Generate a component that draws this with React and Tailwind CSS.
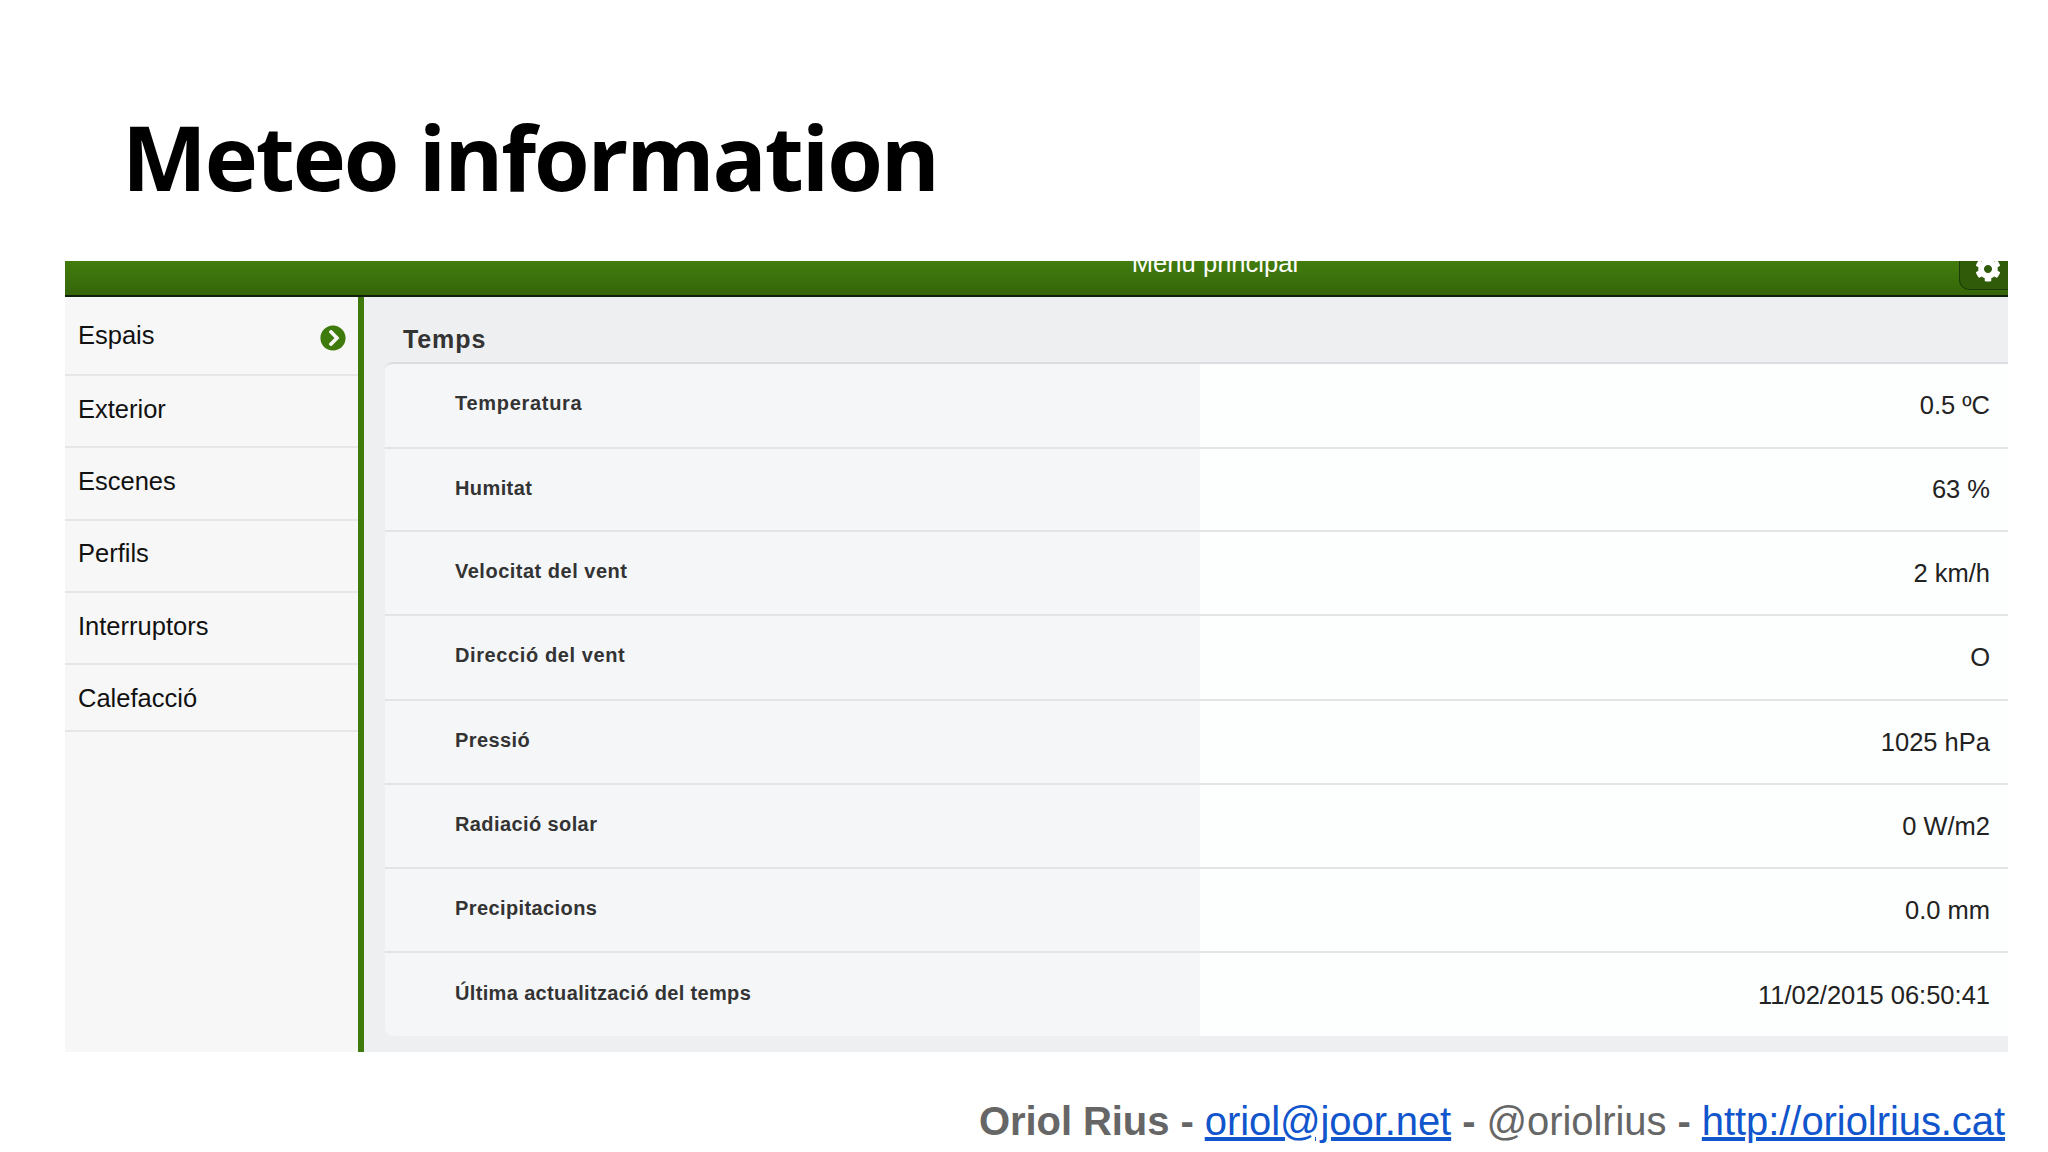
import React from 'react';
import { FaCog, FaChevronCircleRight } from 'react-icons/fa';

const menu = [
    { text: 'Espais', h: 'h-[79px]', pb: 'pb-[2px]', arrow: true },
    { text: 'Exterior', h: 'h-[72px]', pb: 'pb-[5px]' },
    { text: 'Escenes', h: 'h-[73px]', pb: 'pb-[5px]' },
    { text: 'Perfils', h: 'h-[72px]', pb: 'pb-[6px]' },
    { text: 'Interruptors', h: 'h-[72px]', pb: 'pb-[5px]' },
    { text: 'Calefacció', h: 'h-[67px]', pb: 'pb-0' },
];

const rows = [
    { label: 'Temperatura', value: '0.5 ºC', h: 'h-[85px]', pb: 'pb-[6px]', track: 'tracking-[0.7px]' },
    { label: 'Humitat', value: '63 %', h: 'h-[83px]', pb: 'pb-[4px]', track: 'tracking-[0.4px]' },
    { label: 'Velocitat del vent', value: '2 km/h', h: 'h-[84px]', pb: 'pb-[4px]', track: 'tracking-[0.5px]' },
    { label: 'Direcció del vent', value: 'O', h: 'h-[85px]', pb: 'pb-[5px]', track: 'tracking-[0.6px]' },
    { label: 'Pressió', value: '1025 hPa', h: 'h-[84px]', pb: 'pb-[4px]', track: 'tracking-[0.4px]' },
    { label: 'Radiació solar', value: '0 W/m2', h: 'h-[84px]', pb: 'pb-[4px]', track: 'tracking-[0.4px]' },
    { label: 'Precipitacions', value: '0.0 mm', h: 'h-[84px]', pb: 'pb-[4px]', track: 'tracking-[0.4px]' },
    { label: 'Última actualització del temps', value: '11/02/2015 06:50:41', h: 'h-[85px]', pb: 'pb-[6px]', track: 'tracking-[0.35px]' },
];

const App = () => {
    return (
        <div className="w-[2048px] h-[1152px] bg-white overflow-hidden font-['Liberation_Sans',sans-serif]">
            <h1 className="h-[261px] pl-[122px] pt-[96px] text-[90px] leading-[120px] font-bold text-black tracking-[-2.1px] font-['Open_Sans',sans-serif]">
                Meteo information
            </h1>

            <div className="ml-[65px] w-[1943px]">
                <div className="relative h-[36px] overflow-hidden flex justify-center bg-gradient-to-b from-[#427d0e] to-[#356509] border-b-2 border-[#10200a]">
                    <span className="ml-[357px] -mt-[13px] text-[25.6px] leading-[30px] text-white">Menu principal</span>
                    <div className="absolute right-0 -top-[10px] w-[49px] h-[39px] flex items-center justify-center bg-[#305c0a] border border-r-0 border-[#1c3a08] rounded-bl-[10px]">
                        <FaCog className="text-white text-[26px] ml-[8px] mt-[-4px]" />
                    </div>
                </div>

                <div className="flex h-[755px]">
                    <div className="w-[293px] bg-[#f7f7f8]">
                        {menu.map((item) => (
                            <div key={item.text} className={`flex items-center justify-between pl-[13px] pr-[12px] border-b-2 border-[#e6e6e8] ${item.h} ${item.pb}`}>
                                <span className="text-[25.5px] leading-[30px] text-[#111]">{item.text}</span>
                                {item.arrow && <FaChevronCircleRight className="text-[#3f7a0c] text-[26px] mt-[6px]" />}
                            </div>
                        ))}
                    </div>
                    <div className="w-[6px] bg-[#3f7a0c]"></div>

                    <div className="flex-1 bg-[#eeeff1] pl-[21px] pb-[16px] flex flex-col">
                        <div className="h-[65px] pl-[18px] pt-[27px] text-[25px] leading-[30px] font-bold text-[#333] tracking-[0.9px]">Temps</div>
                        <div className="flex-1 border-t-2 border-[#dcdde0] rounded-tl-[8px] rounded-bl-[8px] overflow-hidden">
                            {rows.map((row, i) => (
                                <div key={row.label} className={`flex ${row.h} ${i < rows.length - 1 ? 'border-b-2 border-[#e3e4e6]' : ''}`}>
                                    <div className={`w-[815px] bg-[#f5f6f8] pl-[70px] flex items-center text-[20px] font-bold text-[#333] ${row.track} ${row.pb}`}>
                                        {row.label}
                                    </div>
                                    <div className="flex-1 bg-[#fdfefe] pr-[18px] flex items-center justify-end text-[25.5px] text-[#222]">
                                        {row.value}
                                    </div>
                                </div>
                            ))}
                        </div>
                    </div>
                </div>
            </div>

            <div className="pt-[44px] pr-[43px] text-right text-[40px] leading-[50px] text-[#666] tracking-[-0.07px]">
                <b>Oriol Rius -</b> <a className="text-[#1155cc] underline">oriol@joor.net</a> <b>-</b> @oriolrius <b>-</b> <a className="text-[#1155cc] underline">http://oriolrius.cat</a>
            </div>
        </div>
    );
};

export default App;
